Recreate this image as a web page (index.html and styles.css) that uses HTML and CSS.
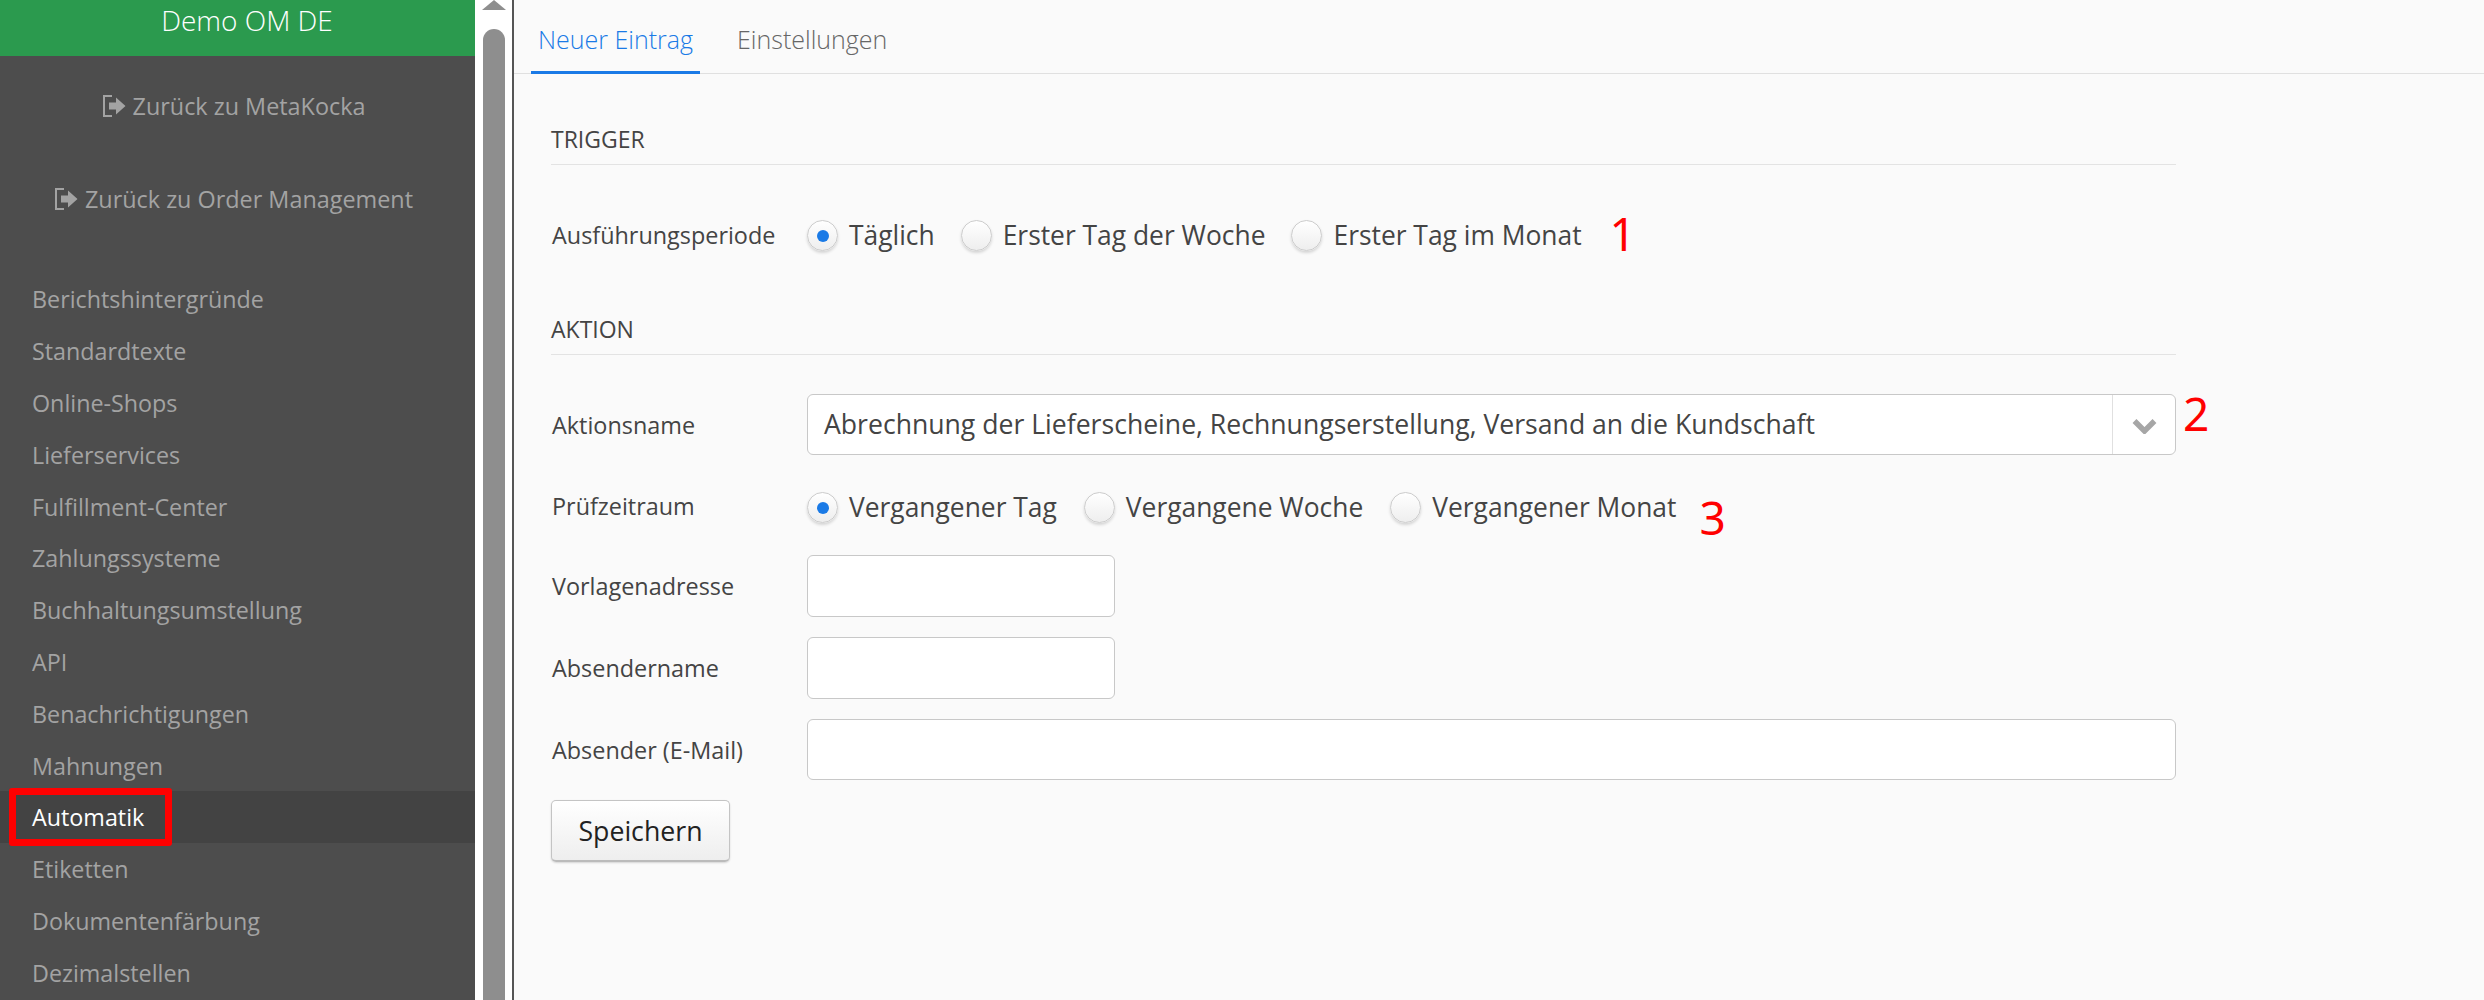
FILE: index.html
```html
<!DOCTYPE html>
<html lang="de">
<head>
<meta charset="utf-8">
<title>Automatik</title>
<link rel="stylesheet" href="styles.css">
</head>
<body>
<aside class="sidebar">
  <div class="brand">Demo OM DE</div>
  <a class="back first"><svg class="exit" viewBox="0 0 24 24"><path d="M10 2H2v20h8" fill="none" stroke="currentColor" stroke-width="2"/><path d="M7 8.500h7V3.500l9.500 8.500-9.500 8.500v-5H7z" fill="currentColor"/></svg>Zurück zu MetaKocka</a>
  <a class="back second"><svg class="exit" viewBox="0 0 24 24"><path d="M10 2H2v20h8" fill="none" stroke="currentColor" stroke-width="2"/><path d="M7 8.500h7V3.500l9.500 8.500-9.500 8.500v-5H7z" fill="currentColor"/></svg>Zurück zu Order Management</a>
  <nav class="menu">
    <a class="item">Berichtshintergründe</a>
    <a class="item">Standardtexte</a>
    <a class="item">Online-Shops</a>
    <a class="item">Lieferservices</a>
    <a class="item">Fulfillment-Center</a>
    <a class="item">Zahlungssysteme</a>
    <a class="item">Buchhaltungsumstellung</a>
    <a class="item">API</a>
    <a class="item">Benachrichtigungen</a>
    <a class="item">Mahnungen</a>
    <a class="item active">Automatik<span class="redbox"></span></a>
    <a class="item">Etiketten</a>
    <a class="item">Dokumentenfärbung</a>
    <a class="item">Dezimalstellen</a>
  </nav>
</aside>
<div class="scrollbar"><span class="arrow"></span><span class="thumb"></span></div>
<main class="main">
  <div class="tabs">
    <a class="tab active">Neuer Eintrag</a>
    <a class="tab">Einstellungen</a>
  </div>
  <form class="form">
    <h3 class="heading trigger">TRIGGER</h3>
    <div class="row period">
      <label class="label raised">Ausführungsperiode</label>
      <div class="radios">
        <span class="radio on"></span><span class="opt">Täglich</span>
        <span class="radio"></span><span class="opt">Erster Tag der Woche</span>
        <span class="radio"></span><span class="opt">Erster Tag im Monat</span>
        <span class="mark m1">1</span>
      </div>
    </div>
    <h3 class="heading action">AKTION</h3>
    <div class="row action-row">
      <label class="label">Aktionsname</label>
      <div class="select">
        <span class="select-value">Abrechnung der Lieferscheine, Rechnungserstellung, Versand an die Kundschaft</span>
        <span class="select-btn"><svg class="chev" viewBox="0 0 25 16"><path d="M2.500 3l10 10 10-10" fill="none" stroke="#a6a6a6" stroke-width="5.500"/></svg></span>
        <span class="mark m2">2</span>
      </div>
    </div>
    <div class="row review">
      <label class="label raised-more">Prüfzeitraum</label>
      <div class="radios spaced">
        <span class="radio on"></span><span class="opt">Vergangener Tag</span>
        <span class="radio"></span><span class="opt">Vergangene Woche</span>
        <span class="radio"></span><span class="opt">Vergangener Monat</span>
        <span class="mark m3">3</span>
      </div>
    </div>
    <div class="row field first-field">
      <label class="label">Vorlagenadresse</label>
      <input class="input short" type="text">
    </div>
    <div class="row field">
      <label class="label">Absendername</label>
      <input class="input short" type="text">
    </div>
    <div class="row field">
      <label class="label">Absender (E-Mail)</label>
      <input class="input wide" type="text">
    </div>
    <button class="save" type="button">Speichern</button>
  </form>
</main>
</body>
</html>
```

FILE: styles.css
```css
* { box-sizing: border-box; }
html, body { margin: 0; height: 100%; overflow: hidden; }
body {
  display: flex;
  font-family: "Open Sans", sans-serif;
  background: #fafafa;
  color: #444;
}

.sidebar {
  width: 475px;
  height: 1000px;
  flex: none;
  background: #4d4d4d;
  overflow: hidden;
}
.brand {
  height: 56px;
  padding: 2px 0 0 19px;
  background: #2b9a4e;
  color: #fff;
  text-align: center;
  font-size: 28px;
  font-weight: 300;
  line-height: 36px;
}
.back {
  display: flex;
  align-items: center;
  justify-content: center;
  gap: 7px;
  height: 36px;
  padding-right: 8px;
  color: #a3a3a3;
  font-size: 23.400px;
}
.back.first { margin-top: 32px; }
.back.second { margin-top: 57px; }
.exit { width: 24px; height: 24px; flex: none; }
.menu { margin-top: 56px; }
.item {
  position: relative;
  display: flex;
  align-items: center;
  height: 51.800px;
  padding: 1px 0 0 32px;
  color: #a3a3a3;
  font-size: 23.300px;
}
.item.active { background: #434343; color: #fff; }
.redbox {
  position: absolute;
  left: 9px;
  top: -3px;
  width: 163px;
  height: 58px;
  border: 7.500px solid #f00;
  border-radius: 3px;
}

.scrollbar {
  position: relative;
  width: 39px;
  height: 1000px;
  flex: none;
  background: #fff;
  border-right: 2px solid #555;
}
.arrow {
  position: absolute;
  left: 7px;
  top: 0;
  border-left: 12px solid transparent;
  border-right: 12px solid transparent;
  border-bottom: 10px solid #8e8e8e;
}
.thumb {
  position: absolute;
  left: 8px;
  top: 29px;
  bottom: 0;
  width: 22px;
  background: #8e8e8e;
  border-radius: 11px 11px 0 0;
}

.main { flex: 1; min-width: 0; }
.tabs {
  display: flex;
  height: 74px;
  padding-left: 17px;
  border-bottom: 1px solid #e0e0e0;
}
.tab {
  height: 74px;
  padding: 21px 7px 0;
  margin-right: 30px;
  color: #666;
  font-size: 25px;
  font-weight: 300;
  line-height: 36px;
}
.tab.active { color: #1a7ae6; border-bottom: 3px solid #1a7ae6; }

.form { width: 1625px; margin-left: 37px; }
.heading {
  margin: 0;
  padding-bottom: 10px;
  border-bottom: 1px solid #e3e3e3;
  color: #444;
  font-size: 23px;
  font-weight: 400;
  line-height: 30px;
}
.heading.trigger { margin-top: 50px; }
.heading.action { margin-top: 63px; }
.row { display: flex; align-items: center; }
.row.period { margin-top: 55px; }
.row.action-row { margin-top: 39px; }
.row.review { margin-top: 37px; }
.row.field { margin-top: 20px; }
.row.first-field { margin-top: 32px; }
.label {
  width: 256px;
  flex: none;
  padding-left: 1px;
  font-size: 23.400px;
}
.label.raised { margin-top: -2px; }
.label.raised-more { margin-top: -4px; }
.radios { position: relative; display: flex; align-items: center; height: 31px; }
.radio {
  display: flex;
  align-items: center;
  justify-content: center;
  width: 31px;
  height: 31px;
  flex: none;
  border: 1px solid #ccc;
  border-radius: 50%;
  background: linear-gradient(#fff, #eee);
  box-shadow: 0 2px 3px rgba(0, 0, 0, 0.15);
}
.radio.on::after {
  content: "";
  width: 12px;
  height: 12px;
  border-radius: 50%;
  background: #1a7ae6;
}
.opt { margin: -2px 26px 0 11px; font-size: 26.400px; white-space: nowrap; }
.radios.spaced .opt { margin-right: 27px; }
.mark {
  color: #f00;
  font-family: "Noto Sans", sans-serif;
  font-weight: 400;
  line-height: 1;
}
.m1 { margin-left: 2px; margin-top: -6px; font-size: 46px; }
.m3 { margin-left: -4px; margin-top: 18px; font-size: 46px; }
.select {
  position: relative;
  display: flex;
  width: 1369px;
  height: 61px;
  background: #fff;
  border: 1px solid #c8c8c8;
  border-radius: 6px;
}
.select-value {
  flex: 1;
  padding-left: 16px;
  font-size: 26.600px;
  line-height: 59px;
}
.select-btn {
  display: flex;
  align-items: center;
  justify-content: center;
  width: 63px;
  border-left: 1px solid #e0e0e0;
}
.chev { width: 25px; height: 16px; margin-top: 3px; }
.m2 { position: absolute; left: 1375px; top: -5px; font-size: 46px; }
.input {
  height: 62px;
  padding: 0 16px;
  background: #fff;
  border: 1px solid #c8c8c8;
  border-radius: 6px;
  outline: none;
}
.input.short { width: 308px; }
.input.wide { width: 1369px; height: 61px; }
.save {
  display: block;
  width: 179px;
  height: 62px;
  margin-top: 20px;
  padding: 0;
  border: 1px solid #c4c4c4;
  border-bottom: 2px solid #bbb;
  border-radius: 5px;
  background: linear-gradient(#fff, #eee);
  box-shadow: 0 1px 2px rgba(0, 0, 0, 0.15);
  color: #222;
  font-family: "Open Sans", sans-serif;
  font-size: 26.700px;
}
```
